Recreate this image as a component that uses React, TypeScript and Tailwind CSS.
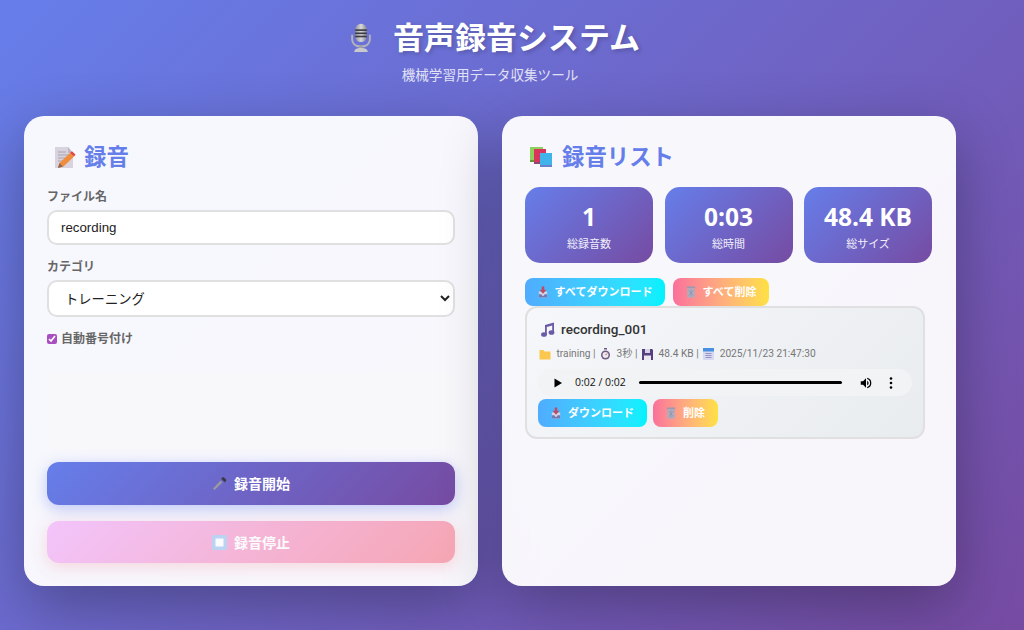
import React from 'react';

const MicIcon = () => (
  <svg width="22" height="31" viewBox="0 0 26 34" preserveAspectRatio="none" className="shrink-0">
    <defs>
      <linearGradient id="micBody" x1="0" x2="1" y1="0" y2="0">
        <stop offset="0" stopColor="#8f8f96" />
        <stop offset="0.5" stopColor="#d9d9dc" />
        <stop offset="1" stopColor="#85858c" />
      </linearGradient>
    </defs>
    <path d="M2.500 14v4.500c0 5.500 4.500 8.500 10.500 8.500s10.500-3 10.500-8.500V14" fill="none" stroke="#b4b4b8" strokeWidth="2.200" />
    <rect x="6" y="2" width="14" height="20" rx="7" fill="url(#micBody)" />
    <rect x="6" y="8" width="14" height="1.800" fill="#3c3c44" />
    <rect x="6" y="11.500" width="14" height="1.800" fill="#3c3c44" />
    <rect x="6" y="15" width="14" height="1.800" fill="#3c3c44" />
    <rect x="11" y="26" width="4" height="3" fill="#a0a0a5" />
    <path d="M5 33c0-3 3-4.500 8-4.500s8 1.500 8 4.500z" fill="#c9c9cd" />
  </svg>
);

const MemoIcon = () => (
  <svg width="22" height="23" viewBox="0 0 22 23" className="shrink-0">
    <path d="M1 1h13l5 6v15H1z" fill="#d8d3dd" />
    <path d="M14 1l5 6h-5z" fill="#bdb6c6" />
    <path d="M4 6h8M4 9h11M4 12h11M4 15h6" stroke="#a9a4b3" strokeWidth="1" />
    <path d="M4 22l1.500-5L16 7l4 3.500L9.500 20.500z" fill="#f08c3c" />
    <path d="M16 7l2-1.800 3.500 3.300-1.500 2z" fill="#e2483d" />
    <path d="M4 22l1.500-5 3.500 3.500z" fill="#8a6a55" />
  </svg>
);

const BooksIcon = () => (
  <svg width="24" height="22" viewBox="0 0 24 22" className="shrink-0">
    <rect x="1" y="1" width="13" height="14" fill="#8ed05c" />
    <rect x="1" y="14" width="13" height="2" fill="#5c9a3c" />
    <rect x="5" y="3" width="12" height="15" fill="#d9345c" />
    <rect x="5" y="16" width="12" height="2" fill="#8c4a70" />
    <rect x="11" y="7" width="12" height="13" fill="#40b4ea" />
    <rect x="11" y="19" width="12" height="2" fill="#6a80c8" />
  </svg>
);

const InboxIcon = () => (
  <svg width="10" height="12" viewBox="0 0 12 13" preserveAspectRatio="none" className="shrink-0">
    <path d="M1 6h10v6.500H1z" fill="#d6d2e4" />
    <path d="M1 9h3l1 1.500h2L8 9h3v3.500H1z" fill="#6f7ab4" />
    <path d="M4.500 0.500h3V4H10L6 8.500 2 4h2.500z" fill="#c04a62" />
  </svg>
);

const TrashIcon = () => (
  <svg width="10" height="12" viewBox="0 0 12 13" preserveAspectRatio="none" className="shrink-0">
    <rect x="1" y="0.500" width="10" height="2" fill="#9a9ab0" />
    <rect x="1.500" y="2.500" width="9" height="10" fill="#adadc0" />
    <path d="M3 4.500l6 6M9 4.500l-6 6M6 3.500v8" stroke="#8f8fa8" strokeWidth="0.700" />
  </svg>
);

const HandMicIcon = () => (
  <svg width="15" height="15" viewBox="0 0 15 15" className="shrink-0">
    <path d="M8.500 4.500L1 12.500l1.500 1.500 8-7.500z" fill="#9a9a9e" />
    <path d="M9 2.500l2.500-1.500 3 3-1.500 2.500z" fill="#3a3a40" />
  </svg>
);

const StopIcon = () => (
  <svg width="15" height="15" viewBox="0 0 15 15" className="shrink-0">
    <rect width="15" height="15" rx="1.500" fill="#7fb0ea" />
    <rect x="3.500" y="3.500" width="8" height="8" fill="#ffffff" />
  </svg>
);

const NoteIcon = () => (
  <svg width="14" height="15" viewBox="0 0 14 15" className="shrink-0">
    <path d="M4 3l9-2.500v10.500h-1.800V3.500L5.800 5v8H4z" fill="#6b5aa6" />
    <ellipse cx="3" cy="12.500" rx="2.900" ry="2.300" fill="#6b5aa6" />
    <ellipse cx="10.500" cy="10.500" rx="2.900" ry="2.300" fill="#6b5aa6" />
  </svg>
);

const FolderIcon = () => (
  <svg width="12" height="11" viewBox="0 0 12 11" className="shrink-0">
    <path d="M0.500 1h4l1 1.500h6V10.500H0.500z" fill="#fbc74e" />
  </svg>
);

const WatchIcon = () => (
  <svg width="11" height="12" viewBox="0 0 11 12" className="shrink-0">
    <rect x="4" y="0" width="3" height="1.500" fill="#6e5a80" />
    <circle cx="5.500" cy="7" r="4.500" fill="#6e5a80" />
    <circle cx="5.500" cy="7" r="3" fill="#ece6ee" />
    <path d="M5.500 7l1.500-1.500" stroke="#c0504e" strokeWidth="1" />
  </svg>
);

const DiskIcon = () => (
  <svg width="11" height="11" viewBox="0 0 11 11" className="shrink-0">
    <path d="M0 0h10l1 1v10H0z" fill="#57407f" />
    <rect x="3" y="0" width="5" height="4" fill="#d8d3e6" />
    <rect x="2" y="6.500" width="7" height="4.500" fill="#ece8f2" />
  </svg>
);

const CalendarIcon = () => (
  <svg width="11" height="12" viewBox="0 0 11 12" className="shrink-0">
    <rect width="11" height="12" rx="1" fill="#d8d8f0" />
    <rect width="11" height="3.500" fill="#4a90e2" />
    <path d="M2.500 5.500h6M2.500 7.500h6M2.500 9.500h6" stroke="#8d8dbd" strokeWidth="0.900" />
  </svg>
);

const Stat = ({ value, label }: { value: string; label: string }) => (
  <div className="flex h-[76px] w-[128px] flex-col items-center rounded-[15px] bg-[linear-gradient(135deg,#667eea,#764ba2)] pt-[15px] text-white">
    <div className="text-[24.500px] font-bold leading-[30px]">{value}</div>
    <div className="mt-[4px] text-[11px] leading-[16px] opacity-90">{label}</div>
  </div>
);

const SmallButton = ({ icon, label, kind, width }: { icon: React.ReactNode; label: string; kind: 'blue' | 'red'; width: string }) => (
  <button
    className={`flex h-[28px] items-center justify-center gap-[7px] rounded-lg text-[11px] font-bold text-white ${width} ${
      kind === 'blue'
        ? 'bg-gradient-to-r from-[#4facfe] to-[#00f2fe]'
        : 'bg-gradient-to-r from-[#fa709a] to-[#fee140]'
    }`}
  >
    {icon}
    {label}
  </button>
);

export default function App() {
  return (
    <div
      className="h-[630px] w-[1024px] overflow-hidden bg-[linear-gradient(135deg,#667eea,#764ba2)] pl-6"
      style={{ fontFamily: '"Open Sans", "Noto Sans CJK JP", sans-serif' }}
    >
      <div className="w-[932px]">
        {/* Header */}
        <div className="flex h-[116px] flex-col items-center pt-[16px] text-white">
          <h1 className="flex h-[42px] items-center gap-[21px] pl-[10px] text-[31px] font-bold leading-[42px] [text-shadow:2px_2px_4px_rgba(0,0,0,0.2)]">
            <MicIcon />
            音声録音システム
          </h1>
          <p className="mt-[7px] text-[13.600px] leading-[20px] opacity-80">機械学習用データ収集ツール</p>
        </div>

        <div className="flex gap-6">
          {/* Recording panel */}
          <div className="h-[470px] w-[454px] rounded-[20px] bg-white/95 px-[23px] pt-[26px] shadow-[0_20px_60px_rgba(0,0,0,0.3)]">
            <h2 className="flex h-[30px] items-center gap-[8px] pl-[7px] text-[22.400px] font-bold leading-[30px] text-[#667eea]">
              <MemoIcon />
              録音
            </h2>
            <label className="mt-[16px] block text-[12px] font-bold leading-[18px] text-[#666]">ファイル名</label>
            <input
              readOnly
              value="recording"
              className="mt-[4px] block h-[35px] w-[408px] rounded-[10px] border-2 border-[#e0e0e0] bg-white px-[12px] text-[13.300px] text-[#222] outline-none"
              style={{ fontFamily: '"Liberation Sans", sans-serif' }}
            />
            <label className="mt-[13px] block text-[12px] font-bold leading-[18px] text-[#666]">カテゴリ</label>
            <select className="mt-[4px] block h-[37px] w-[408px] rounded-[10px] border-2 border-[#e0e0e0] bg-white px-[12px] text-[13.300px] text-[#222] outline-none">
              <option>トレーニング</option>
            </select>
            <label className="mt-[13px] flex h-[18px] items-center gap-[4px] text-[12px] font-bold text-[#666]">
              <input type="checkbox" readOnly checked className="m-0 h-[10px] w-[10px] accent-[#a84fc0]" />
              自動番号付け
            </label>
            <div className="mt-[23px] h-[80px] w-[408px] rounded-[10px] bg-[#f8f9fa]/60" />
            <button className="mt-[11px] flex h-[43px] w-[408px] items-center justify-center gap-[7px] rounded-[12px] bg-[linear-gradient(135deg,#667eea,#764ba2)] text-[14px] font-bold text-white shadow-[0_4px_15px_rgba(102,126,234,0.4)]">
              <HandMicIcon />
              録音開始
            </button>
            <button className="mt-[16px] flex h-[42px] w-[408px] items-center justify-center gap-[7px] rounded-[12px] bg-[linear-gradient(135deg,#f093fb,#f5576c)] text-[14px] font-bold text-white opacity-50 shadow-[0_4px_15px_rgba(245,87,108,0.4)]">
              <StopIcon />
              録音停止
            </button>
          </div>

          {/* List panel */}
          <div className="h-[470px] w-[454px] rounded-[20px] bg-white/95 px-[23px] pt-[26px] shadow-[0_20px_60px_rgba(0,0,0,0.3)]">
            <h2 className="flex h-[30px] items-center gap-[9px] pl-[4px] text-[22.400px] font-bold leading-[30px] text-[#667eea]">
              <BooksIcon />
              録音リスト
            </h2>
            <div className="mt-[15px] flex gap-[11.500px]">
              <Stat value="1" label="総録音数" />
              <Stat value="0:03" label="総時間" />
              <Stat value="48.4 KB" label="総サイズ" />
            </div>
            <div className="mt-[15px] flex gap-[8px]">
              <SmallButton icon={<InboxIcon />} label="すべてダウンロード" kind="blue" width="w-[140px]" />
              <SmallButton icon={<TrashIcon />} label="すべて削除" kind="red" width="w-[96px]" />
            </div>
            <div className="h-[133px] w-[400px] rounded-[12px] border-2 border-[#e0e0e0] bg-[linear-gradient(135deg,#f5f7fa,#e9ecef)] px-[11px] pt-[11px]">
              <div className="flex h-[20px] items-center gap-[6px] pl-[3px] text-[13.500px] font-medium text-[#333]" style={{ fontFamily: 'Roboto, "Noto Sans CJK JP", sans-serif' }}>
                <NoteIcon />
                recording_001
              </div>
              <div className="mt-[6px] flex h-[18px] items-center gap-[4.500px] pl-[1px] text-[10.200px] text-[#777]" style={{ fontFamily: 'Roboto, "Noto Sans CJK JP", sans-serif' }}>
                <FolderIcon />
                <span className="ml-[1px]">training |</span>
                <WatchIcon />
                <span className="ml-[1px]">3秒 |</span>
                <DiskIcon />
                <span className="ml-[1px]">48.4 KB |</span>
                <CalendarIcon />
                <span className="ml-[1px]">2025/11/23 21:47:30</span>
              </div>
              <div className="mt-[6px] flex h-[27px] w-[374px] items-center rounded-full bg-[#f1f3f4] text-[#111]">
                <svg width="10" height="10" viewBox="0 0 10 10" className="ml-[15px] shrink-0">
                  <path d="M1.500 0.500L9 5l-7.500 4.500z" fill="#000" />
                </svg>
                <span className="ml-[12px] whitespace-nowrap text-[10.500px]">0:02 / 0:02</span>
                <div className="ml-[13px] h-[3px] w-[203px] rounded-full bg-black" />
                <svg width="14" height="14" viewBox="0 0 24 24" className="ml-[17px] shrink-0">
                  <path d="M3 9v6h4l5 5V4L7 9zm13.500 3A4.500 4.500 0 0 0 14 8v8a4.500 4.500 0 0 0 2.500-4zM14 3.200v2.100a7 7 0 0 1 0 13.400v2.100a9 9 0 0 0 0-17.600z" fill="#000" />
                </svg>
                <svg width="4" height="12" viewBox="0 0 4 12" className="ml-[16px] shrink-0">
                  <circle cx="2" cy="1.500" r="1.300" fill="#000" />
                  <circle cx="2" cy="6" r="1.300" fill="#000" />
                  <circle cx="2" cy="10.500" r="1.300" fill="#000" />
                </svg>
              </div>
              <div className="mt-[3px] flex gap-[6px]">
                <SmallButton icon={<InboxIcon />} label="ダウンロード" kind="blue" width="w-[109px]" />
                <SmallButton icon={<TrashIcon />} label="削除" kind="red" width="w-[65px]" />
              </div>
            </div>
          </div>
        </div>
      </div>
    </div>
  );
}
